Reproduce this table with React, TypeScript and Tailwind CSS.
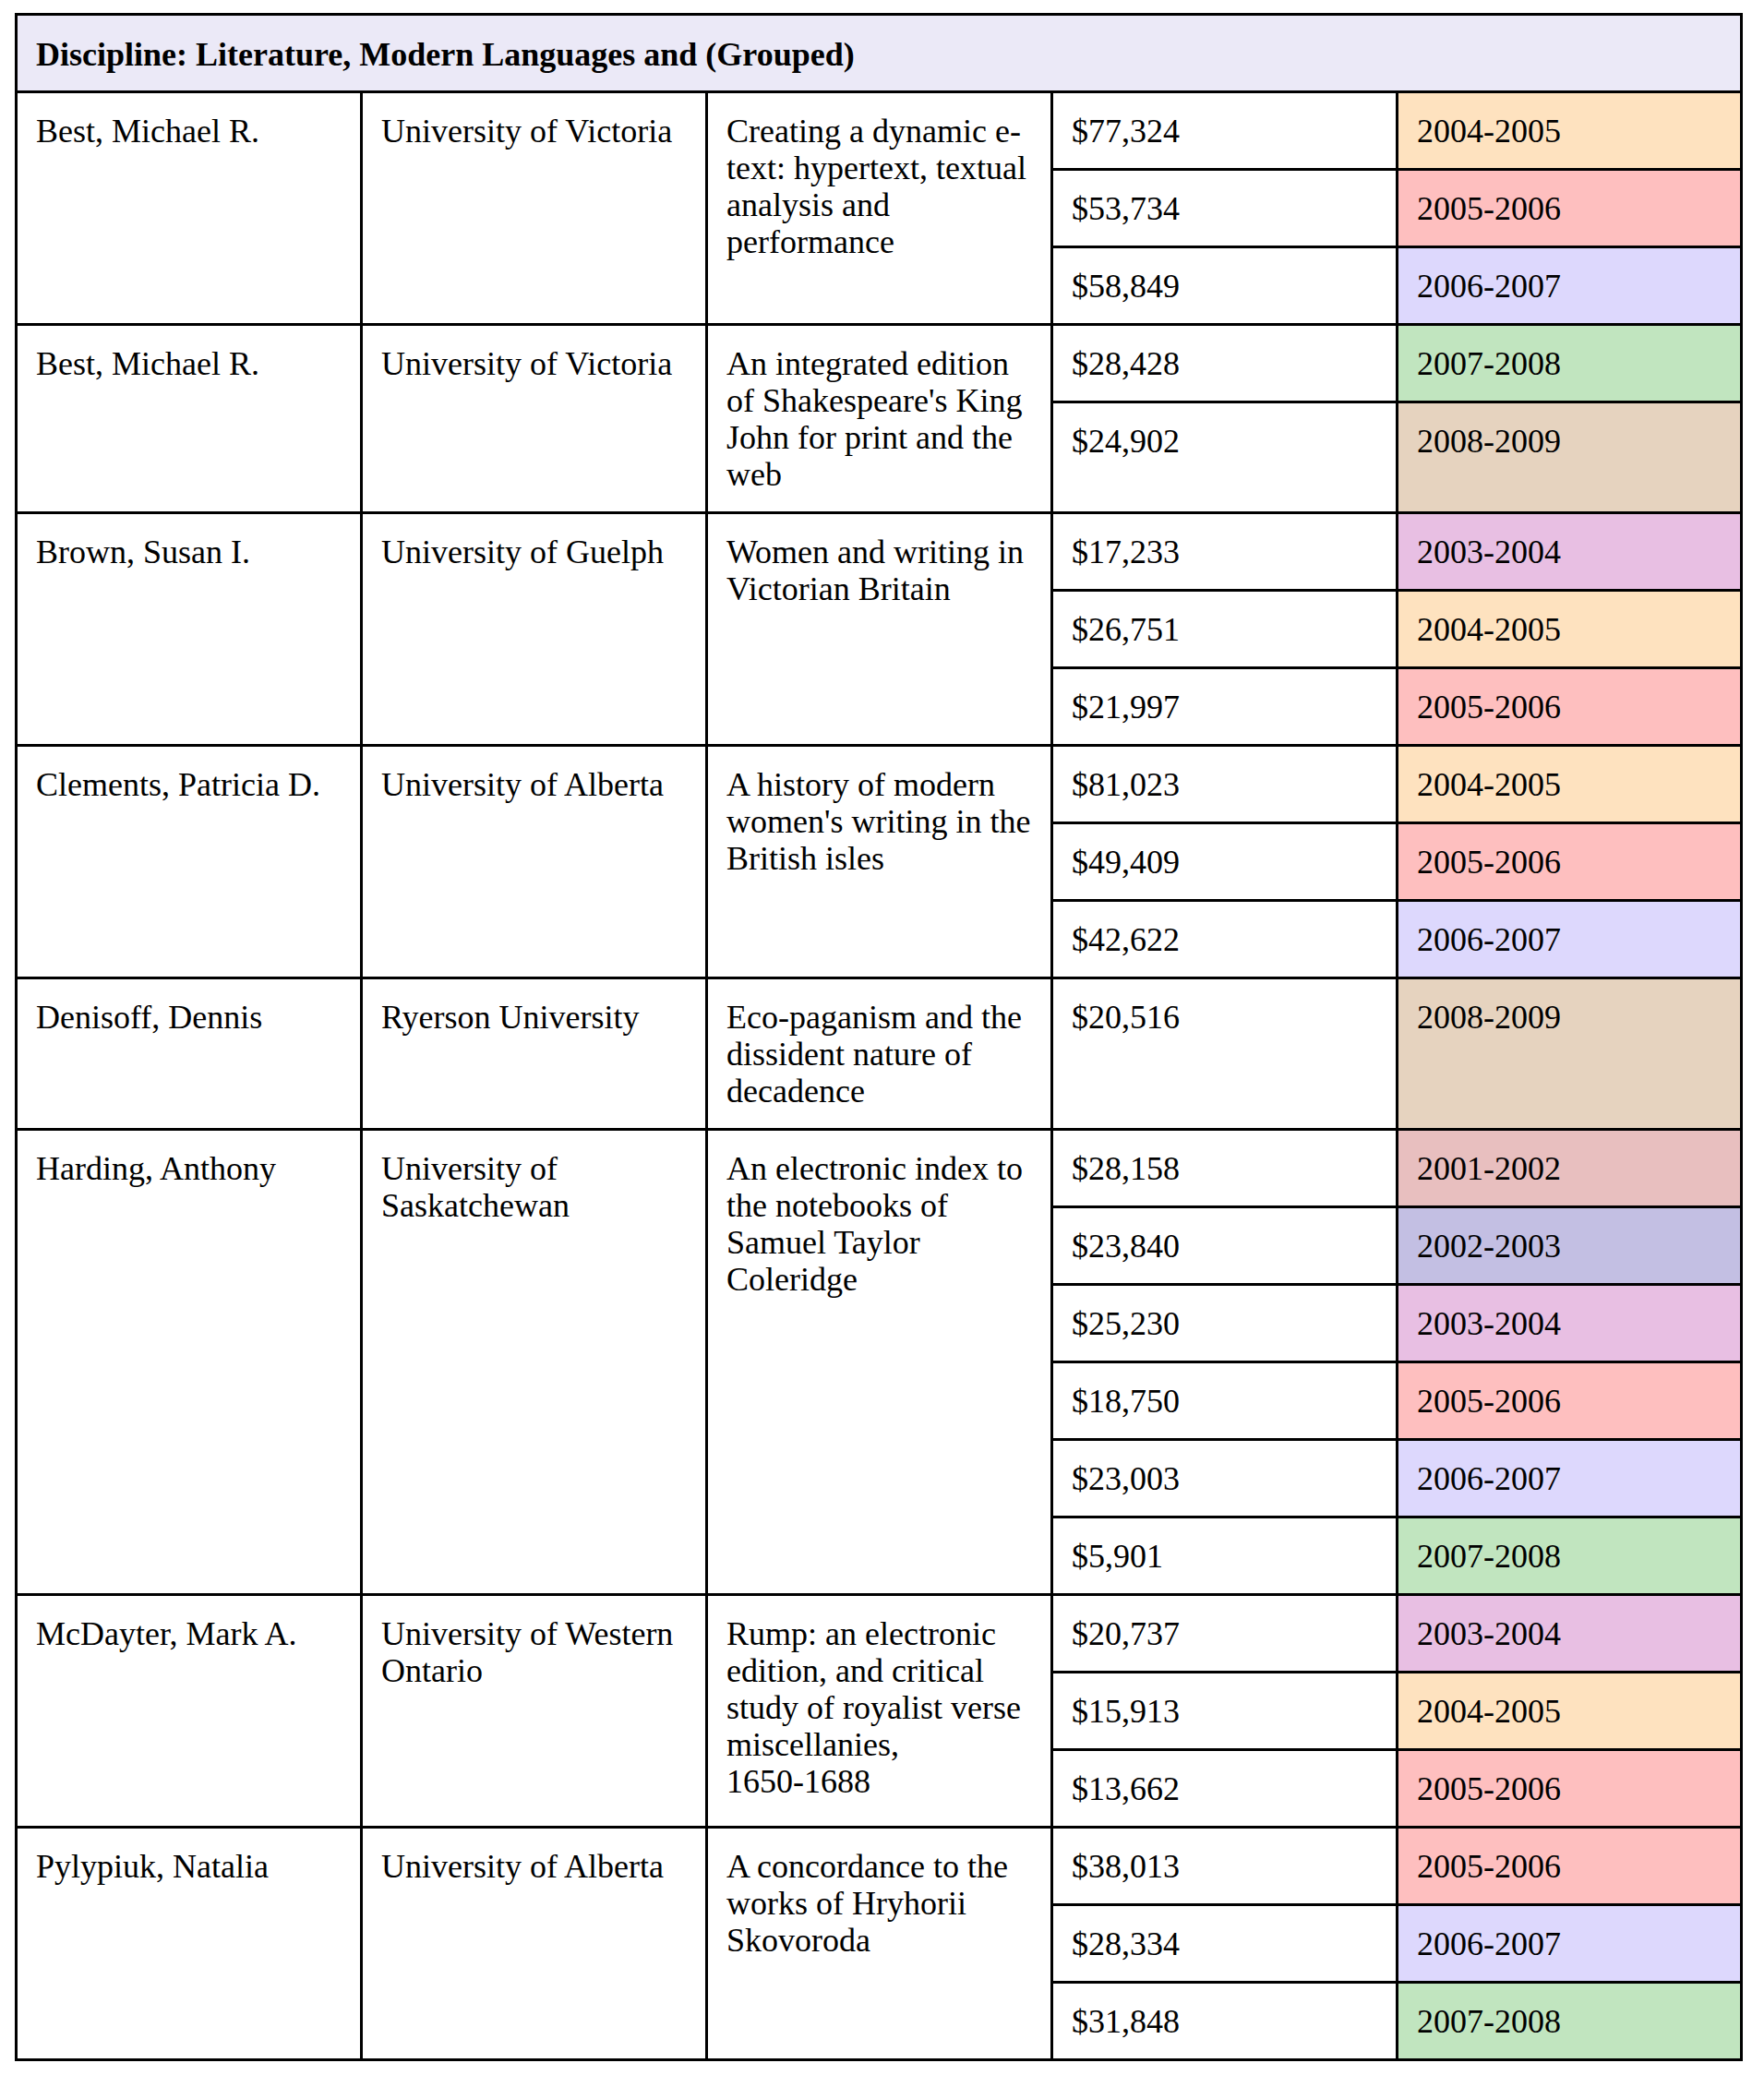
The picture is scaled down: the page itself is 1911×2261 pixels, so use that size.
import React from "react";

// year -> cell colour
const yearColors: Record<string, string> = {
  "2001-2002": "bg-[#e8bfbf]",
  "2002-2003": "bg-[#c3bfe3]",
  "2003-2004": "bg-[#e8bfe3]",
  "2004-2005": "bg-[#fee2bf]",
  "2005-2006": "bg-[#febfbf]",
  "2006-2007": "bg-[#ddd8fd]",
  "2007-2008": "bg-[#c1e5bf]",
  "2008-2009": "bg-[#e6d3bf]",
};

type Grant = {
  name: string;
  school: string;
  project: React.ReactNode;
  awards: [string, string][];
};

const grants: Grant[] = [
  {
    name: "Best, Michael R.",
    school: "University of Victoria",
    project: "Creating a dynamic e-text: hypertext, textual analysis and performance",
    awards: [
      ["$77,324", "2004-2005"],
      ["$53,734", "2005-2006"],
      ["$58,849", "2006-2007"],
    ],
  },
  {
    name: "Best, Michael R.",
    school: "University of Victoria",
    project: "An integrated edition of Shakespeare's King John for print and the web",
    awards: [
      ["$28,428", "2007-2008"],
      ["$24,902", "2008-2009"],
    ],
  },
  {
    name: "Brown, Susan I.",
    school: "University of Guelph",
    project: "Women and writing in Victorian Britain",
    awards: [
      ["$17,233", "2003-2004"],
      ["$26,751", "2004-2005"],
      ["$21,997", "2005-2006"],
    ],
  },
  {
    name: "Clements, Patricia D.",
    school: "University of Alberta",
    project: "A history of modern women's writing in the British isles",
    awards: [
      ["$81,023", "2004-2005"],
      ["$49,409", "2005-2006"],
      ["$42,622", "2006-2007"],
    ],
  },
  {
    name: "Denisoff, Dennis",
    school: "Ryerson University",
    project: "Eco-paganism and the dissident nature of decadence",
    awards: [["$20,516", "2008-2009"]],
  },
  {
    name: "Harding, Anthony",
    school: "University of Saskatchewan",
    project: "An electronic index to the notebooks of Samuel Taylor Coleridge",
    awards: [
      ["$28,158", "2001-2002"],
      ["$23,840", "2002-2003"],
      ["$25,230", "2003-2004"],
      ["$18,750", "2005-2006"],
      ["$23,003", "2006-2007"],
      ["$5,901", "2007-2008"],
    ],
  },
  {
    name: "McDayter, Mark A.",
    school: "University of Western Ontario",
    project: (
      <>
        Rump: an electronic edition, and critical study of royalist verse miscellanies,{" "}
        <span className="whitespace-nowrap">1650-1688</span>
      </>
    ),
    awards: [
      ["$20,737", "2003-2004"],
      ["$15,913", "2004-2005"],
      ["$13,662", "2005-2006"],
    ],
  },
  {
    name: "Pylypiuk, Natalia",
    school: "University of Alberta",
    project: "A concordance to the works of Hryhorii Skovoroda",
    awards: [
      ["$38,013", "2005-2006"],
      ["$28,334", "2006-2007"],
      ["$31,848", "2007-2008"],
    ],
  },
];

export default function App() {
  return (
    <div className="min-h-screen bg-white pt-[14px] pl-4 font-['Liberation_Serif','Times_New_Roman',serif] text-[36px] leading-[40px] text-black">
      <div className="w-[1872px] border-[3px] border-black">
        <div className="bg-[#ebe9f7] px-5 pt-[22px] pb-[19px] font-bold">
          Discipline: Literature, Modern Languages and (Grouped)
        </div>

        {grants.map((g, i) => (
          <div key={i} className="flex border-t-[3px] border-black">
            <div className="w-[374px] shrink-0 border-r-[3px] border-black px-5 pt-[21px] pb-5">
              {g.name}
            </div>
            <div className="w-[374px] shrink-0 border-r-[3px] border-black px-5 pt-[21px] pb-5">
              {g.school}
            </div>
            <div className="w-[374px] shrink-0 border-r-[3px] border-black px-5 pt-[21px] pb-5">
              {g.project}
            </div>
            <div className="flex flex-1 flex-col">
              {g.awards.map(([amount, year], j) => (
                <div
                  key={j}
                  className={`flex ${j > 0 ? "border-t-[3px] border-black" : ""} ${
                    j == g.awards.length - 1 ? "flex-1" : ""
                  }`}
                >
                  <div className="w-[374px] shrink-0 border-r-[3px] border-black px-5 pt-[21px] pb-5">
                    {amount}
                  </div>
                  <div className={`flex-1 px-5 pt-[21px] pb-5 ${yearColors[year]}`}>{year}</div>
                </div>
              ))}
            </div>
          </div>
        ))}
      </div>
    </div>
  );
}
